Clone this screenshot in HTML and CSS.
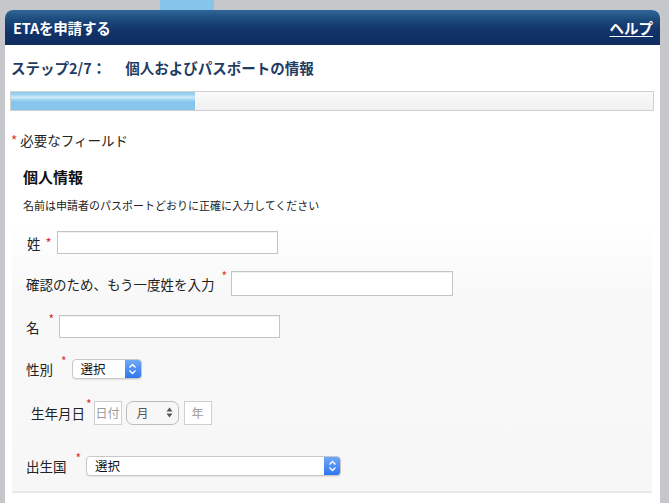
FILE: index.html
```html
<!DOCTYPE html>
<html lang="ja">
<head>
<meta charset="utf-8">
<link rel="stylesheet" href="styles.css">
</head>
<body>
<div class="tab"></div>
<div class="card">
  <div class="header">
    <span class="title">ETAを申請する</span>
    <a class="help" href="#">ヘルプ</a>
  </div>
  <div class="body">
    <h2 class="step">ステップ2/7：<span class="step-name">個人およびパスポートの情報</span></h2>
    <div class="progress"><div class="progress-fill"></div></div>
    <p class="required"><span class="ast">*</span> 必要なフィールド</p>
    <div class="panel">
      <h3 class="panel-title">個人情報</h3>
      <p class="note">名前は申請者のパスポートどおりに正確に入力してください</p>
      <div class="rows">
        <div class="row row-surname">
          <span class="label">姓</span><span class="ast ast-mid">*</span>
          <input class="text w220" type="text">
        </div>
        <div class="row row-confirm">
          <span class="label">確認のため、もう一度姓を入力</span><span class="ast ast-up">*</span>
          <input class="text w222 tall" type="text">
        </div>
        <div class="row row-given">
          <span class="label">名</span><span class="ast ast-up">*</span>
          <input class="text w220" type="text">
        </div>
        <div class="row row-gender">
          <span class="label">性別</span><span class="ast ast-up">*</span>
          <div class="select w70">
            <span class="select-text">選択</span>
            <span class="select-btn"><svg width="9" height="12" viewBox="0 0 9 12"><path d="M1.5 4.5 L4.5 1.5 L7.5 4.5 M1.5 7.5 L4.5 10.5 L7.5 7.5" fill="none" stroke="#fff" stroke-width="1.4"/></svg></span>
          </div>
        </div>
        <div class="row row-dob">
          <span class="label">生年月日</span><span class="ast ast-top">*</span>
          <div class="date-box day">日付</div>
          <div class="month">
            <span>月</span>
            <svg width="7" height="11" viewBox="0 0 7 11"><path d="M0.5 4.5 L3.5 0.5 L6.5 4.5 Z M0.5 6.5 L3.5 10.5 L6.5 6.5 Z" fill="#555"/></svg>
          </div>
          <div class="date-box year">年</div>
        </div>
        <div class="row row-country">
          <span class="label">出生国</span><span class="ast ast-up">*</span>
          <div class="select w254">
            <span class="select-text">選択</span>
            <span class="select-btn"><svg width="9" height="12" viewBox="0 0 9 12"><path d="M1.5 4.5 L4.5 1.5 L7.5 4.5 M1.5 7.5 L4.5 10.5 L7.5 7.5" fill="none" stroke="#fff" stroke-width="1.4"/></svg></span>
          </div>
        </div>
      </div>
    </div>
  </div>
</div>
</body>
</html>
```

FILE: styles.css
```css
* { box-sizing: border-box; }
html, body { margin: 0; padding: 0; }
body {
  background: #c6c7cb;
  font-family: "Noto Sans CJK JP", "Liberation Sans", sans-serif;
  color: #222;
  height: 503px;
  overflow: hidden;
}
.tab {
  margin-left: 160px;
  width: 54px;
  height: 10px;
  background: #86c4eb;
}
.card {
  margin: 0 9px 0 5px;
  border-radius: 8px 8px 0 0;
  overflow: hidden;
  background: #fff;
  height: 493px;
}
.header {
  height: 35px;
  background: linear-gradient(#2f6698 0%, #1b4779 30%, #12336a 60%, #0f2e5f 100%);
  display: flex;
  align-items: center;
  justify-content: space-between;
  padding: 0 7px 0 8px;
}
.title {
  color: #fff;
  font-weight: bold;
  font-size: 14.5px;
  letter-spacing: -0.2px;
}
.help {
  color: #fff;
  font-weight: bold;
  font-size: 14.5px;
  text-decoration: underline;
  text-underline-offset: 2px;
}
.body {
  padding: 0 6px 0 5px;
}
.step {
  margin: 13px 0 0 1px;
  font-size: 14.5px;
  line-height: 20px;
  font-weight: bold;
  color: #1f3c63;
}
.step-name { margin-left: 19px; }
.progress {
  margin-top: 13px;
  height: 20px;
  border: 1px solid #d0d0d0;
  background: linear-gradient(#fafafa, #f0f0f0);
}
.progress-fill {
  width: 184px;
  height: 18px;
  background: linear-gradient(#8bcaee 0%, #9fd4f2 15%, #cfeafa 30%, #a3d6f3 42%, #86c6ec 55%, #86c6ec 100%);
}
.required {
  margin: 19px 0 0 1px;
  font-size: 13.5px;
  line-height: 20px;
}
.ast { color: #d9322b; }
.panel {
  margin: 8px 2px 0 2px;
  height: 335px;
  padding: 8px 11px 0 11px;
  background: linear-gradient(#ffffff 0px, #ffffff 62px, #f8f8f8 140px, #f7f7f7 100%);
  border-bottom: 2px solid #e8e8e8;
}
.panel-title {
  margin: 0;
  font-size: 15px;
  line-height: 22px;
  font-weight: bold;
  color: #111;
}
.note {
  margin: 9px 0 0 0;
  font-size: 11px;
  line-height: 16px;
  color: #222;
}
.rows {
  display: flex;
  flex-direction: column;
}
.row {
  display: flex;
  align-items: center;
  height: 25px;
  font-size: 13.5px;
}
.row-surname { margin-top: 17px; padding-left: 4px; }
.row-confirm { margin-top: 16px; padding-left: 3px; }
.row-given { margin-top: 18px; padding-left: 3px; }
.row-gender { margin-top: 17px; padding-left: 3px; }
.row-dob { margin-top: 19px; padding-left: 8px; }
.row-country { margin-top: 28px; padding-left: 3px; }
.label { color: #222; }
.ast-mid { margin: 0 4px 0 5px; font-size: 13px; }
.ast-up { margin: 0 4px 0 7px; font-size: 12px; align-self: flex-start; line-height: 14px; margin-top: -2px; }
.ast-top { margin: 0 2px 0 1px; font-size: 12px; align-self: flex-start; line-height: 12px; margin-top: -2px; }
.row-surname .ast-mid { margin-right: 5px; }
.row-confirm .ast-up { margin-left: 7px; margin-right: 4px; }
.row-given .ast-up { margin-left: 9px; margin-right: 5px; }
.row-gender .ast-up { margin-left: 8px; margin-right: 5px; }
.row-country .ast-up { margin-left: 9px; margin-right: 5px; }
.text {
  height: 23px;
  border: 1px solid #c4c4c4;
  background: #fff;
  box-shadow: inset 0 1px 1px rgba(0,0,0,0.06);
  padding: 0;
  margin: 0;
}
.tall { height: 25px; }
.w220 { width: 221px; }
.w222 { width: 222px; }
.select {
  display: flex;
  align-items: center;
  height: 20px;
  border: 1px solid #c8c8c8;
  border-radius: 4px;
  background: #fff;
  overflow: hidden;
  box-shadow: 0 1px 1px rgba(0,0,0,0.08);
}
.w70 { width: 70px; }
.w254 { width: 255px; }
.select-text {
  flex: 1;
  font-size: 12.5px;
  padding-left: 8px;
  line-height: 18px;
  color: #111;
}
.select-btn {
  width: 16px;
  height: 100%;
  background: linear-gradient(#6ea8f7, #2f77ef);
  display: flex;
  align-items: center;
  justify-content: center;
}
.date-box {
  height: 24px;
  border: 1px solid #cfcfcf;
  background: #fff;
  font-size: 12px;
  color: #9a9a9a;
  display: flex;
  align-items: center;
  justify-content: center;
}
.day { width: 28px; margin-left: 0; }
.year { width: 28px; margin-left: 5px; }
.month {
  margin-left: 4px;
  width: 53px;
  height: 24px;
  border: 1px solid #bdbdbd;
  border-radius: 7px;
  background: #f7f7f7;
  display: flex;
  align-items: center;
  justify-content: space-between;
  padding: 0 5px 0 10px;
  font-size: 12px;
  color: #555;
}
```
